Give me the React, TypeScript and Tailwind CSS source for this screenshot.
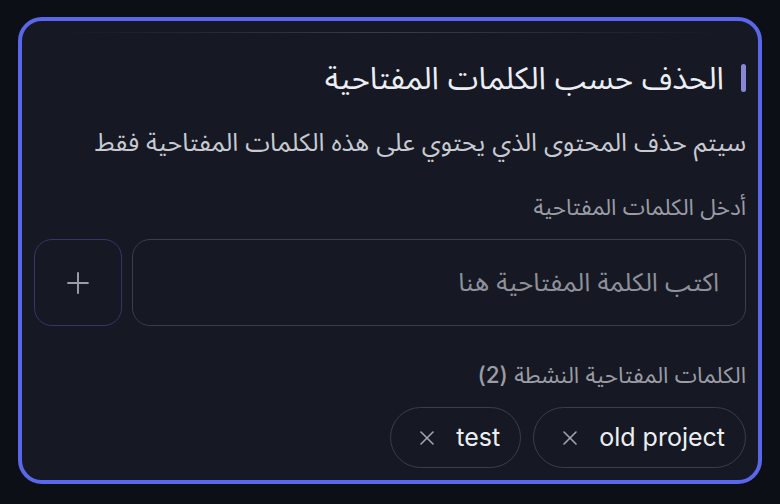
import { Plus, X } from "lucide-react";

const keywords = ["old project", "test"];

export default function App() {
  return (
    <div
      dir="rtl"
      className="h-[504px] w-[780px] bg-[#0c0f16] pt-[17px] px-[18px] overflow-hidden"
      style={{ fontFamily: 'Inter, "Noto Sans Arabic", "DejaVu Sans", sans-serif' }}
    >
      <div className="h-[467px] rounded-[24px] border-4 border-[#5b67ea] bg-[#161923] px-[12px] overflow-hidden">
        {/* faded divider from the section above */}
        <div className="mt-[11px] mx-[24px] h-px bg-gradient-to-l from-transparent via-[#3a3d48] to-transparent" />

        {/* title */}
        <div className="mt-[31px] flex items-center gap-[17px] h-[28px]">
          <span className="w-[5px] h-[28px] rounded-full bg-[#8a86d6]" />
          <h2 className="text-[31px] leading-[28px] text-[#eceef3]">
            الحذف حسب الكلمات المفتاحية
          </h2>
        </div>

        <p className="mt-[36px] text-[25px] leading-[28px] text-[#c8cad2]">
          سيتم حذف المحتوى الذي يحتوي على هذه الكلمات المفتاحية فقط
        </p>

        <label className="mt-[40px] block text-[22.5px] leading-[22px] text-[#9a9ca6]">
          أدخل الكلمات المفتاحية
        </label>

        <div className="mt-[21px] flex gap-[10px] h-[87px]">
          <input
            className="flex-1 rounded-[18px] border border-[#3b3e4a] bg-transparent px-[26px] text-[25.5px] text-[#e5e7eb] placeholder:text-[#8e909a] outline-none"
            placeholder="اكتب الكلمة المفتاحية هنا"
          />
          <button className="w-[88px] shrink-0 rounded-[18px] border border-[#37366a] flex items-center justify-center text-[#9a9ca8]">
            <Plus size={34} strokeWidth={1.4} />
          </button>
        </div>

        <div className="mt-[38px] text-[22.5px] leading-[22px] text-[#9a9ca6]">
          الكلمات المفتاحية النشطة <span className="font-medium">(2)</span>
        </div>

        <div className="mt-[21px] flex gap-[12px]">
          {keywords.map((k) => (
            <span
              key={k}
              className="h-[61px] rounded-full border border-[#3b3e4a] flex items-center gap-[17px] pr-[20px] pl-[24px] text-[25px] text-[#eceef3]"
            >
              <span dir="ltr">{k}</span>
              <X size={24} strokeWidth={1.6} className="text-[#a2a4ad]" />
            </span>
          ))}
        </div>
      </div>
    </div>
  );
}
